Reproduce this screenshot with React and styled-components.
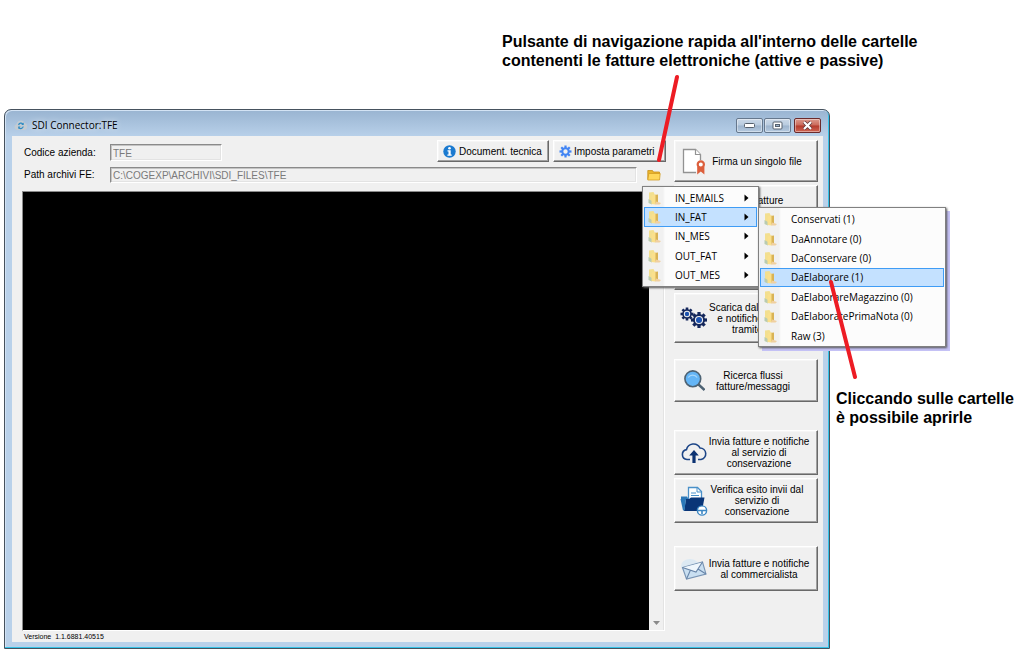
import React from 'react';
import styled, { createGlobalStyle } from 'styled-components';

const GlobalStyle = createGlobalStyle`
  * { box-sizing: border-box; }
  body { margin: 0; background: #fff; color: #000; }
  button, input, textarea { font: inherit; color: inherit; }
  svg { flex: none; }
`;

const Page = styled.div`
  position: relative; overflow: hidden;
  display: flex; flex-direction: column;
  min-height: 100vh;
  padding: 0 0 5px 4px;
  font: 10px/11px "Liberation Sans", Arial, sans-serif;
`;

const Head = styled.header`
  display: flex; justify-content: flex-end;
  height: 109px; padding-top: 32px;
`;

const Note = styled.p`
  margin: 0; width: ${({ width }) => width}px;
  font-size: 16px; line-height: 19px; font-weight: bold;
  white-space: pre;
`;

const Body = styled.div`
  flex: 1; display: flex;
`;

const Aside = styled.aside`
  padding: 280px 0 0 6px;
`;

const Window = styled.main`
  flex: 1; min-width: 0;
  display: flex; flex-direction: column;
  padding: 0 6px 6px 7px;
  border: 1px solid #46525e; border-radius: 7px 7px 0 0;
  background: linear-gradient(#99b4d1, #b9d1ea 27px);
  box-shadow: inset -1px -1px 0 #35c3e8, inset 1px 1px 0 #d3e3f4;
`;

const TitleBar = styled.div`
  display: flex; align-items: center; gap: 4px;
  height: 26px; padding: 4px 2px 0 2px;
`;

const Title = styled.h1`
  flex: 1; margin: 0;
  font: 10px/14px "Open Sans", sans-serif;
  text-shadow: 0 0 6px #fff;
`;

const Controls = styled.div`
  display: flex; align-self: flex-start; gap: 1px;
  padding-top: 4px;
`;

const Control = styled.button`
  display: flex; align-items: center; justify-content: center;
  width: 27px; height: 15px; padding: 0;
  margin-left: ${({ close }) => close ? 2 : 0}px;
  border: 1px solid ${({ close }) => close ? '#6b2a2b' : '#66788d'}; border-radius: 2px;
  background: ${({ close }) => close
    ? 'linear-gradient(#dc9a8e, #cb6a5a 48%, #b33a2c 52%, #cf6553)'
    : 'linear-gradient(#ccd9e8, #b8cbdf 48%, #9db4cd 52%, #b5cae0)'};
  box-shadow: inset 0 0 0 1px rgba(255, 255, 255, 0.4);
`;

const Client = styled.div`
  flex: 1; display: grid;
  grid-template-columns: minmax(0, 1fr) 144px; column-gap: 9px;
  padding: 4px 5px 0 10px;
  background: #f0f0f0;
`;

const Panel = styled.div`
  display: flex; flex-direction: column;
`;

const Row = styled.div`
  display: flex; align-items: ${({ top }) => top ? 'flex-start' : 'center'};
  height: ${({ top }) => top ? 27 : 16}px;
`;

const Label = styled.label`
  width: 88px; padding: ${({ top }) => top ? 7 : 0}px 0 2px 2px;
`;

const Field = styled.input`
  height: ${({ short }) => short ? 17 : 16}px; min-width: 0; padding: 1px 1px 0 2px;
  ${({ short }) => short ? 'width: 112px; margin: 4px auto 0 0;' : 'flex: 1;'}
  border: 1px solid; border-color: #8a8a8a #fff #fff #8a8a8a;
  box-shadow: inset 1px 1px 0 #c4c4c4, inset -1px -1px 0 #e3e3e3;
  border-radius: 0; background: #f0f0f0; color: #7a7a7a; outline: none;
`;

const Raised = styled.button`
  border: 1px solid; border-color: #fff #696969 #696969 #fff;
  box-shadow: inset -1px -1px 0 #a0a0a0, inset 1px 1px 0 #f6f6f6;
  border-radius: 0; background: #f0f0f0;
`;

const ToolButton = styled(Raised)`
  display: flex; align-items: center; gap: 3px;
  width: ${({ width }) => width}px; height: 22px; margin-right: 4px; padding: 0 5px;
  white-space: nowrap;
  &:last-child { margin-right: -1px; gap: 2px; }
`;

const FolderWrap = styled.div`
  position: relative; margin-left: 6px;
`;

const FolderButton = styled.button`
  display: flex; align-items: center; justify-content: center;
  width: 22px; height: 16px; padding: 0;
  border: 0; background: none;
`;

const MenuBox = styled.ul`
  position: absolute; z-index: ${({ sub }) => sub ? 3 : 2};
  top: ${({ sub }) => sub ? 0 : 19}px; left: ${({ sub }) => sub ? 114 : -1}px;
  display: grid; grid-auto-rows: 1fr;
  width: ${({ sub }) => sub ? 188 : 117}px; height: ${({ sub }) => sub ? 140 : 101}px;
  margin: 0; padding: 1px; list-style: none;
  border: 1px solid #808080;
  background: linear-gradient(90deg, #f1f1f1 20px, #fcfcfc 22px);
  box-shadow: ${({ sub }) => sub
    ? '1px 1px 2px #555, 4px 4px 0 #c5c2f6'
    : '1px 1px 2px #555'};
  font: 10px/14px "Open Sans", sans-serif;
`;

const MenuItem = styled.li`
  position: relative; display: flex;
`;

const MenuButton = styled.button`
  flex: 1; display: flex; align-items: center; gap: 13px;
  padding: 0 7px 0 2px; text-align: left; white-space: nowrap;
  border: 1px solid ${({ active }) => active ? '#3f9cf5' : 'transparent'};
  background: ${({ active }) => active ? '#c4e1ff' : 'none'};
`;

const MenuText = styled.span`
  flex: 1;
`;

const Console = styled.div`
  flex: 1; display: flex;
  margin: 8px 0 0;
  border: 1px solid; border-color: #8a8a8a #fff #fff #8a8a8a;
`;

const Log = styled.textarea`
  flex: 1; min-width: 0; padding: 4px;
  border: 0; outline: none; resize: none;
  background: #000; color: #fff;
`;

const Scroll = styled.div`
  display: flex; align-items: flex-end; justify-content: center;
  width: 15px; padding-bottom: 5px;
  border-right: 1px solid #e3e3e3; background: #f0f0f0;
`;

const Version = styled.small`
  padding-left: 2px;
  font-size: 7px; line-height: 11px; white-space: pre;
`;

const Side = styled.div`
  display: flex; flex-direction: column;
`;

const SideButton = styled(Raised)`
  display: flex; align-items: center; flex: none;
  height: ${({ height }) => height}px; padding: 0 4px;
  margin-bottom: ${({ space }) => space || 3}px;
`;

const SideIcon = styled.span`
  display: flex; justify-content: center; width: 30px; margin-right: -4px;
`;

const SideLabel = styled.span`
  flex: 1; padding-right: ${({ inset }) => inset || 0}px;
  text-align: center; white-space: pre;
`;

const Pointers = styled.svg`
  position: absolute; z-index: 5; top: 0; right: 0;
  pointer-events: none;
`;

const CloudSync = () => (
  <svg width="14" height="12" viewBox="0 0 14 12">
    <path d="M3 11a3 3 0 0 1-.5-5.800A4.300 4.300 0 0 1 10.600 4 3.600 3.600 0 0 1 10.500 11z" fill="#c3cbd2" />
    <path d="M4.600 6a2.500 2.500 0 0 1 4.200-1.200M9.200 7.500A2.500 2.500 0 0 1 5 8.800" fill="none" stroke="#2a8ac4" strokeWidth="1.200" />
    <path d="M9.700 3.500v2.500H7.200zM4.200 10V7.600h2.400z" fill="#2a8ac4" />
  </svg>
);

const Info = () => (
  <svg width="13" height="13" viewBox="0 0 13 13">
    <circle cx="6.500" cy="6.500" r="6.200" fill="#1b7ad0" />
    <circle cx="6.500" cy="3.200" r="1.300" fill="#fff" />
    <path d="M4.500 5.200h3.200v4.400h1v1.200H4.400V9.600h1.100V6.400h-1z" fill="#fff" />
  </svg>
);

const Teeth = ({ cx, cy, r, w, color }) => [0, 45, 90, 135, 180, 225, 270, 315].map(a => (
  <rect key={a} x={cx - w / 2} y={cy - r} width={w} height={r / 2} fill={color} transform={`rotate(${a} ${cx} ${cy})`} />
));

const Gear = () => (
  <svg width="13" height="13" viewBox="0 0 13 13">
    <Teeth cx={6.5} cy={6.5} r={6} w={2.2} color="#4285f4" />
    <circle cx="6.500" cy="6.500" r="3.200" fill="none" stroke="#4285f4" strokeWidth="2" />
  </svg>
);

const Gears = () => (
  <svg width="28" height="22" viewBox="0 0 28 22">
    <Teeth cx={7} cy={7} r={6.5} w={2.6} color="#14275c" />
    <circle cx="7" cy="7" r="4.800" fill="#14275c" />
    <circle cx="7" cy="7" r="3.200" fill="#f0f0f0" />
    <circle cx="7" cy="7" r="2.200" fill="#1c52b0" />
    <Teeth cx={19} cy={13} r={8} w={3.2} color="#14275c" />
    <circle cx="19" cy="13" r="6" fill="#14275c" />
    <circle cx="19" cy="13" r="4.100" fill="#f0f0f0" />
    <circle cx="19" cy="13" r="3" fill="#1c52b0" />
  </svg>
);

const Folder = () => (
  <svg width="14" height="12" viewBox="0 0 14 12">
    <path d="M.8 10.500V1.500h4.700l1 1.500h6v2" fill="#e9b52d" stroke="#c98f1a" strokeWidth=".8" />
    <path d="M.8 11 1.800 4.500h11.400L12.500 11z" fill="#ffd75a" stroke="#d39d23" strokeWidth=".8" />
  </svg>
);

const OpenFolder = () => (
  <svg width="15" height="14" viewBox="0 0 15 14">
    <path d="M2 1.500 6.500 1l1 2v10L2 12z" fill="#f3df8f" />
    <path d="M7 4l4-.5v7.500L8 13z" fill="#d9b356" />
    <path d="M1.500 8 5 10v3.500L1.500 12z" fill="#b9cbb0" />
    <path d="M4.500 5 8.500 3v10.500L4.500 13z" fill="#fae08c" />
    <path d="m9 10.500 5 1.500-1.500 1.500H8z" fill="#f0d0a0" />
  </svg>
);

const SignedFile = () => (
  <svg width="24" height="28" viewBox="0 0 24 28">
    <path d="M14 25.500H1.500v-23h12l5 5V13" fill="#fff" stroke="#929292" strokeWidth="1.300" />
    <path d="M13.500 2.500v5h5" fill="#fff" stroke="#929292" strokeWidth="1.200" />
    <path d="M15.200 19.500V27.500l3.600-3 3.600 3v-8z" fill="#dc5f3c" />
    <circle cx="18.800" cy="17.500" r="3.100" fill="#fff" stroke="#dc5f3c" strokeWidth="2.200" />
  </svg>
);

const Lens = () => (
  <svg width="22" height="22" viewBox="-1 0 22 22">
    <path d="m14 14 6.500 6" stroke="#4d6273" strokeWidth="2.400" />
    <circle cx="8.800" cy="8.800" r="7.900" fill="#64b5f6" stroke="#4d6273" strokeWidth="1.600" />
    <path d="M4.200 7.500a5.500 5.500 0 0 1 9 0" fill="none" stroke="#a8d8fb" strokeWidth="1.300" />
  </svg>
);

const CloudUp = () => (
  <svg width="26" height="23" viewBox="0 0 26 23">
    <path d="M9 18.500H6A5 5 0 0 1 5.500 8.600 7.200 7.200 0 0 1 19 7a5.800 5.800 0 0 1 1 11.500h-3" fill="none" stroke="#1c4587" strokeWidth="1.600" />
    <path d="M13 9 8.200 14.500h3.200V22h3.200v-7.500h3.200z" fill="#0c3272" />
  </svg>
);

const FolderDocs = () => (
  <svg width="28" height="30" viewBox="0 0 28 30">
    <path d="M1 14v-3.500h6l2 3.500z" fill="#2b78b8" />
    <path d="M8.500 16V1.500h9l4 4V16" fill="#fff" stroke="#4a90c8" strokeWidth="1.300" />
    <path d="M17 1.500V6h4.500M11 7h5M11 9.500h8" fill="none" stroke="#4a90c8" />
    <path d="M6 13h3l2-1.500h13.500L22 25H4z" fill="#0a3577" />
    <path d="M.5 13H6l-1.500 11.500H3z" fill="#2b78b8" />
    <circle cx="22" cy="24.500" r="4.600" fill="#fff" stroke="#3c87c4" strokeWidth="1.400" />
    <path d="M17.500 24.500h9M22 24v4" stroke="#3c87c4" strokeWidth="1.600" />
  </svg>
);

const Mail = () => (
  <svg width="28" height="24" viewBox="0 0 28 24">
    <ellipse cx="10" cy="9" rx="9" ry="7" fill="#cfe5f5" opacity=".6" />
    <path d="M2.500 10.500 22.500 5l3.500 12L6.500 22z" fill="#c9dff1" stroke="#7894b4" strokeWidth="1.100" />
    <path d="M3 10.500 22 5.500 16 15z" fill="#eef6fc" />
    <path d="m2.500 10.500 13.500 4.500L22.500 5M6.500 22l4-9M26 17l-8-5" fill="none" stroke="#6784a8" strokeWidth="1.100" />
  </svg>
);

const MENU = ['IN_EMAILS', 'IN_FAT', 'IN_MES', 'OUT_FAT', 'OUT_MES'];
const SUBMENU = [
  'Conservati (1)', 'DaAnnotare (0)', 'DaConservare (0)', 'DaElaborare (1)',
  'DaElaborareMagazzino (0)', 'DaElaboratePrimaNota (0)', 'Raw (3)'
];

const ACTIONS = [
  { text: 'Firma un singolo file', icon: <SignedFile />, height: 42, inset: 4 },
  { text: 'Firma fatture\nemesse (0)\ne invia', height: 52, inset: 8 },
  { name: 'Invia flussi', height: 50 },
  { text: 'Scarica dal SDI fatture\ne notifiche ricevute\ntramite PEC', icon: <Gears />, height: 50, space: 16 },
  { text: 'Ricerca flussi\nfatture/messaggi', icon: <Lens />, height: 43, space: 28, inset: 12 },
  { text: 'Invia fatture e notifiche\nal servizio di\nconservazione', icon: <CloudUp />, height: 45 },
  { text: 'Verifica esito invii dal\nservizio di\nconservazione', icon: <FolderDocs />, height: 45, space: 23, inset: 4 },
  { text: 'Invia fatture e notifiche\nal commercialista', icon: <Mail />, height: 45 }
];

const SubMenu = () => (
  <MenuBox sub>
    {SUBMENU.map(text => (
      <MenuItem key={text}>
        <MenuButton active={text === 'DaElaborare (1)' ? 1 : 0}>
          <OpenFolder /><MenuText>{text}</MenuText>
        </MenuButton>
      </MenuItem>
    ))}
  </MenuBox>
);

const FolderMenu = () => (
  <MenuBox>
    {MENU.map(text => (
      <MenuItem key={text}>
        <MenuButton active={text === 'IN_FAT' ? 1 : 0}>
          <OpenFolder /><MenuText>{text}</MenuText>
          <svg width="5" height="8" viewBox="0 0 5 8"><path d="M.5.500 4.500 4 .5 7.500z" /></svg>
        </MenuButton>
        {text === 'IN_FAT' && <SubMenu />}
      </MenuItem>
    ))}
  </MenuBox>
);

const App = () => (
  <Page>
    <GlobalStyle />
    <Head>
      <Note width={522}>{"Pulsante di navigazione rapida all'interno delle cartelle\ncontenenti le fatture elettroniche (attive e passive)"}</Note>
    </Head>

    <Body>
      <Window>
        <TitleBar>
          <CloudSync />
          <Title>SDI Connector:TFE</Title>
          <Controls>
            <Control aria-label="Riduci a icona">
              <svg width="11" height="5"><rect x=".5" y=".5" width="10" height="4" rx="1" fill="#fff" stroke="#56616e" /></svg>
            </Control>
            <Control aria-label="Ingrandisci">
              <svg width="11" height="9"><rect x="1" y="1" width="9" height="7" rx="1" fill="#fff" stroke="#56616e" /><rect x="3.500" y="3.500" width="4" height="2" fill="#9db4cd" stroke="#56616e" /></svg>
            </Control>
            <Control close={1} aria-label="Chiudi">
              <svg width="11" height="9"><path d="m2 1 7 7M9 1 2 8" stroke="#5d3436" strokeWidth="3.600" /><path d="m2 1 7 7M9 1 2 8" stroke="#fff" strokeWidth="2.200" /></svg>
            </Control>
          </Controls>
        </TitleBar>

        <Client>
          <Panel>
            <Row top={1}>
              <Label top={1} htmlFor="azienda">Codice azienda:</Label>
              <Field id="azienda" short={1} readOnly value="TFE" />
              <ToolButton width={112}><Info />Document. tecnica</ToolButton>
              <ToolButton width={113}><Gear />Imposta parametri</ToolButton>
            </Row>
            <Row>
              <Label htmlFor="archivi">Path archivi FE:</Label>
              <Field id="archivi" readOnly value="C:\COGEXP\ARCHIVI\SDI_FILES\TFE" />
              <FolderWrap>
                <FolderButton aria-label="Apri cartelle"><Folder /></FolderButton>
                <FolderMenu />
              </FolderWrap>
            </Row>
            <Console>
              <Log aria-label="Log" readOnly />
              <Scroll>
                <svg width="7" height="4"><path d="M0 0h7L3.500 4z" fill="#8a8a8a" /></svg>
              </Scroll>
            </Console>
            <Version>{'Versione  1.1.6881.40515'}</Version>
          </Panel>

          <Side>
            {ACTIONS.map(({ text, name, icon, height, space, inset }, i) => (
              <SideButton key={i} height={height} space={space} aria-label={name}>
                <SideIcon>{icon}</SideIcon>
                <SideLabel inset={inset}>{text}</SideLabel>
              </SideButton>
            ))}
          </Side>
        </Client>
      </Window>

      <Aside>
        <Note width={188}>{'Cliccando sulle cartelle\nè possibile aprirle'}</Note>
      </Aside>
    </Body>

    <Pointers width="1024" height="654" viewBox="0 0 1024 654">
      <path d="M677 77 659 160M831 282l24 95" fill="none" stroke="#ed1c24" strokeWidth="4" strokeLinecap="round" />
    </Pointers>
  </Page>
);

export default App;
